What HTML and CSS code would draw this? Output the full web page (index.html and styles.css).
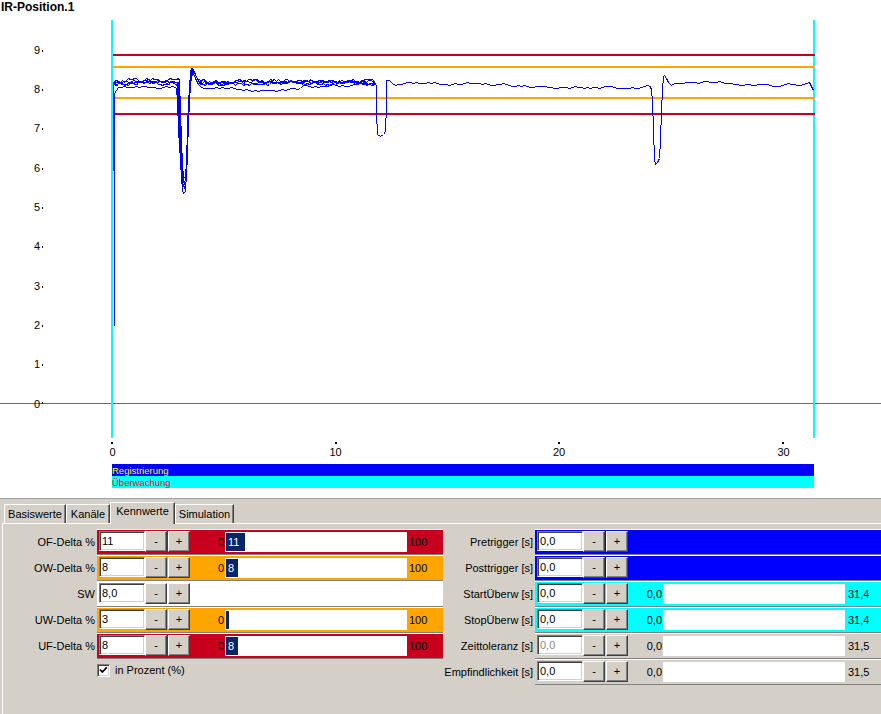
FILE: index.html
```html
<!DOCTYPE html>
<html lang="de">
<head>
<meta charset="utf-8">
<title>IR-Position.1</title>
<link rel="stylesheet" href="styles.css">
</head>
<body>
<section class="chart-area">
  <svg class="chart" width="881" height="498" viewBox="0 0 881 498">
    <rect class="zero-axis" x="0" y="403" width="881" height="1"/>
    <g class="ylabels">
      <text x="40" y="54">9</text>
      <text x="40" y="93">8</text>
      <text x="40" y="132">7</text>
      <text x="40" y="172">6</text>
      <text x="40" y="211">5</text>
      <text x="40" y="250">4</text>
      <text x="40" y="290">3</text>
      <text x="40" y="329">2</text>
      <text x="40" y="368">1</text>
      <text x="40" y="408">0</text>
    </g>
    <g class="yticks">
      <rect x="42" y="50" width="1" height="2"/>
      <rect x="42" y="89" width="1" height="2"/>
      <rect x="42" y="128" width="1" height="2"/>
      <rect x="42" y="168" width="1" height="2"/>
      <rect x="42" y="207" width="1" height="2"/>
      <rect x="42" y="246" width="1" height="2"/>
      <rect x="42" y="286" width="1" height="2"/>
      <rect x="42" y="325" width="1" height="2"/>
      <rect x="42" y="364" width="1" height="2"/>
      <rect x="42" y="402" width="1" height="2"/>
    </g>
    <rect class="cursor" x="111" y="20" width="2" height="418"/>
    <rect class="cursor" x="813" y="20" width="2" height="418"/>
    <rect class="lim-red" x="113" y="54" width="702" height="2"/>
    <rect class="lim-orange" x="113" y="66" width="702" height="2"/>
    <rect class="lim-orange" x="113" y="97" width="702" height="2"/>
    <rect class="lim-red" x="113" y="113" width="702" height="2"/>
    <polyline id="t1" class="trace" points=""/>
    <polyline id="t2" class="trace" points=""/>
    <polyline id="t3" class="trace" points=""/>
    <polyline id="t5" class="trace" points=""/>
    <polyline id="t4" class="trace" points=""/>
    <g class="xticks">
      <rect x="111" y="442" width="2" height="2"/>
      <rect x="335" y="442" width="2" height="2"/>
      <rect x="558" y="442" width="2" height="2"/>
      <rect x="782" y="442" width="2" height="2"/>
    </g>
    <g class="xlabels">
      <text x="112.5" y="456">0</text>
      <text x="335.5" y="456">10</text>
      <text x="559" y="456">20</text>
      <text x="783.5" y="456">30</text>
    </g>
    <rect class="leg-reg" x="112" y="464" width="702" height="12"/>
    <rect class="leg-uew" x="112" y="476" width="702" height="12"/>
    <text class="leg-text leg-reg-text" x="112" y="474">Registrierung</text>
    <text class="leg-text leg-uew-text" x="112" y="486">Überwachung</text>
  </svg>
  <h1 class="chart-title">IR-Position.1</h1>
</section>

<section class="panel">
  <div class="tabs">
    <div class="tab tab-1">Basiswerte</div>
    <div class="tab tab-2">Kanäle</div>
    <div class="tab tab-3 active">Kennwerte</div>
    <div class="tab tab-4">Simulation</div>
  </div>
  <div class="tab-body">
    <div class="col col-left">
      <div class="row">
        <div class="lbl">OF-Delta %</div>
        <div class="strip red">
          <input class="num" type="text" value="11" readonly>
          <button class="btn">-</button>
          <button class="btn plus">+</button>
          <span class="zero">0</span>
          <span class="bar"><span class="fill" style="width:19px">11</span></span>
          <span class="max">100</span>
        </div>
      </div>
      <div class="row">
        <div class="lbl">OW-Delta %</div>
        <div class="strip orange">
          <input class="num" type="text" value="8" readonly>
          <button class="btn">-</button>
          <button class="btn plus">+</button>
          <span class="zero">0</span>
          <span class="bar"><span class="fill" style="width:12px">8</span></span>
          <span class="max">100</span>
        </div>
      </div>
      <div class="row">
        <div class="lbl">SW</div>
        <div class="strip white">
          <input class="num" type="text" value="8,0" readonly>
          <button class="btn">-</button>
          <button class="btn plus">+</button>
        </div>
      </div>
      <div class="row">
        <div class="lbl">UW-Delta %</div>
        <div class="strip orange">
          <input class="num" type="text" value="3" readonly>
          <button class="btn">-</button>
          <button class="btn plus">+</button>
          <span class="zero">0</span>
          <span class="bar"><span class="fill" style="width:3px"></span></span>
          <span class="max">100</span>
        </div>
      </div>
      <div class="row">
        <div class="lbl">UF-Delta %</div>
        <div class="strip red">
          <input class="num" type="text" value="8" readonly>
          <button class="btn">-</button>
          <button class="btn plus">+</button>
          <span class="zero">0</span>
          <span class="bar"><span class="fill" style="width:12px">8</span></span>
          <span class="max">100</span>
        </div>
      </div>
      <label class="check-row">
        <span class="checkbox"><svg width="11" height="11" viewBox="0 0 11 11"><path d="M2 4.5 L4.3 7 L8.8 2.3" fill="none" stroke="#000" stroke-width="1.8"/></svg></span>
        <span class="check-label">in Prozent (%)</span>
      </label>
    </div>

    <div class="col col-right">
      <div class="row">
        <div class="lbl">Pretrigger [s]</div>
        <div class="strip blue">
          <input class="num" type="text" value="0,0" readonly>
          <button class="btn">-</button>
          <button class="btn plus">+</button>
        </div>
      </div>
      <div class="row">
        <div class="lbl">Posttrigger [s]</div>
        <div class="strip blue">
          <input class="num" type="text" value="0,0" readonly>
          <button class="btn">-</button>
          <button class="btn plus">+</button>
        </div>
      </div>
      <div class="row">
        <div class="lbl">StartÜberw [s]</div>
        <div class="strip cyan">
          <input class="num" type="text" value="0,0" readonly>
          <button class="btn">-</button>
          <button class="btn plus">+</button>
          <span class="zero">0,0</span>
          <span class="bar"></span>
          <span class="max">31,4</span>
        </div>
      </div>
      <div class="row">
        <div class="lbl">StopÜberw [s]</div>
        <div class="strip cyan">
          <input class="num" type="text" value="0,0" readonly>
          <button class="btn">-</button>
          <button class="btn plus">+</button>
          <span class="zero">0,0</span>
          <span class="bar"></span>
          <span class="max">31,4</span>
        </div>
      </div>
      <div class="row">
        <div class="lbl">Zeittoleranz [s]</div>
        <div class="strip plain">
          <input class="num disabled" type="text" value="0,0" disabled>
          <button class="btn">-</button>
          <button class="btn plus">+</button>
          <span class="zero">0,0</span>
          <span class="bar"></span>
          <span class="max">31,5</span>
        </div>
      </div>
      <div class="row">
        <div class="lbl">Empfindlichkeit [s]</div>
        <div class="strip plain">
          <input class="num" type="text" value="0,0" readonly>
          <button class="btn">-</button>
          <button class="btn plus">+</button>
          <span class="zero">0,0</span>
          <span class="bar"></span>
          <span class="max">31,5</span>
        </div>
      </div>
    </div>
  </div>
</section>
<script src="script.js"></script>
</body>
</html>
```

FILE: styles.css
```css
* {
  box-sizing: border-box;
}

html,
body {
  margin: 0;
  padding: 0;
}

body {
  width: 881px;
  height: 714px;
  overflow: hidden;
  background: #d4d0c8;
  font-family: "Liberation Sans", Arial, sans-serif;
  font-size: 11px;
  color: #000;
}

/* ---------- chart ---------- */
.chart-area {
  position: relative;
  height: 498px;
  background: #fff;
}

.chart {
  position: absolute;
  left: 0;
  top: 0;
  display: block;
}

.chart-title {
  position: relative;
  margin: 0;
  padding: 1px 0 0 1px;
  font-size: 12px;
  line-height: 13px;
  font-weight: bold;
}

.chart text {
  font-family: "Liberation Sans", Arial, sans-serif;
  font-size: 11px;
  fill: #000;
}

.ylabels text {
  text-anchor: end;
}

.xlabels text {
  text-anchor: middle;
}

.zero-axis {
  fill: #6e6e6e;
}

.yticks rect,
.xticks rect {
  fill: #000;
}

.cursor {
  fill: #00ffff;
}

.lim-red {
  fill: #c8001e;
}

.lim-orange {
  fill: #ffa500;
}

.trace {
  fill: none;
  stroke: #0000ff;
  stroke-width: 1;
  shape-rendering: crispEdges;
}

.leg-reg {
  fill: #0000ff;
}

.leg-uew {
  fill: #00ffff;
}

.chart .leg-text {
  font-size: 9.5px;
}

.chart .leg-reg-text {
  fill: #ffff00;
}

.chart .leg-uew-text {
  fill: #ff0000;
}

/* ---------- panel ---------- */
.panel {
  height: 216px;
  border-top: 1px solid #a0a0a0;
  background: #d4d0c8;
}

.tabs {
  display: flex;
  align-items: flex-end;
  height: 24px;
  padding-left: 4px;
}

.tab {
  flex: none;
  height: 19px;
  padding-top: 2px;
  border-top: 1px solid #fff;
  border-left: 1px solid #fff;
  border-right: 1px solid #404040;
  box-shadow: inset -1px 0 #808080;
  text-align: center;
  line-height: 14px;
  white-space: nowrap;
}

.tab-1 { width: 62px; }
.tab-2 { width: 44px; }
.tab-3 { width: 65px; }
.tab-4 { width: 59px; }

.tab.active {
  position: relative;
  z-index: 1;
  height: 22px;
  padding-top: 1px;
  margin-bottom: -1px;
  background: #d4d0c8;
}

.tab-body {
  display: flex;
  height: 191px;
  margin-left: 2px;
  padding-top: 5px;
  border-top: 1px solid #fff;
  border-left: 1px solid #fff;
}

.col-left {
  width: 440px;
  flex: none;
}

.col-right {
  width: 438px;
  flex: none;
}

.row {
  display: flex;
  height: 26px;
}

.lbl {
  flex: none;
  text-align: right;
  line-height: 26px;
  white-space: nowrap;
}

.col-left .lbl {
  width: 92px;
}

.col-right .lbl {
  width: 90px;
}

.strip {
  flex: none;
  display: flex;
  align-items: flex-start;
  width: 346px;
  height: 26px;
  margin-left: 2px;
  padding: 1px 0 0 2px;
  border-top: 1px solid #fff;
  border-bottom: 1px solid #808080;
}

.strip.red { background: #c8001e; }
.strip.orange { background: #ffa500; }
.strip.white { background: #fff; }
.strip.blue { background: #0000ff; }
.strip.cyan { background: #00ffff; }
.strip.plain { background: #d4d0c8; }

.num {
  flex: none;
  width: 46px;
  height: 20px;
  margin: 0;
  padding: 0 0 0 2px;
  border: 1px solid;
  border-color: #808080 #fff #fff #808080;
  box-shadow: inset 1px 1px #404040, inset -1px -1px #d4d0c8;
  background: #fff;
  font-family: "Liberation Sans", Arial, sans-serif;
  font-size: 11px;
  color: #000;
  outline: none;
}

.num.disabled {
  color: #8a8a8a;
  -webkit-text-fill-color: #8a8a8a;
  background: #fff;
  opacity: 1;
}

.btn {
  flex: none;
  width: 22px;
  height: 21px;
  margin: 0;
  padding: 0;
  border: 1px solid;
  border-color: #fff #404040 #404040 #fff;
  box-shadow: inset -1px -1px #808080;
  background: #d4d0c8;
  font-family: "Liberation Sans", Arial, sans-serif;
  font-size: 11px;
  line-height: 19px;
  color: #000;
  text-align: center;
}

.btn.plus {
  margin-left: 1px;
}

.zero {
  flex: none;
  width: 35px;
  padding-right: 1px;
  text-align: right;
  line-height: 22px;
}

.bar {
  flex: none;
  display: flex;
  width: 182px;
  height: 20px;
  margin-top: 1px;
  padding: 1px;
  background: #fff;
}

.fill {
  display: block;
  height: 100%;
  padding-left: 2px;
  overflow: hidden;
  white-space: nowrap;
  background: #0a246a;
  color: #fff;
  line-height: 18px;
}

.max {
  flex: none;
  margin-left: 2px;
  line-height: 22px;
}

.col-right .max {
  margin-left: 3px;
}

.check-row {
  display: flex;
  align-items: center;
  height: 13px;
  margin-top: 5px;
  padding-left: 94px;
}

.checkbox {
  flex: none;
  display: flex;
  align-items: center;
  justify-content: center;
  width: 13px;
  height: 13px;
  border: 1px solid;
  border-color: #808080 #fff #fff #808080;
  box-shadow: inset 1px 1px #404040, inset -1px -1px #d4d0c8;
  background: #fff;
}

.checkbox svg {
  display: block;
}

.check-label {
  margin-left: 5px;
  line-height: 13px;
}
```

FILE: script.js
```js
(function () {
  var seed = 987654321;
  function rnd() {
    seed = (seed * 16807) % 2147483647;
    return seed / 2147483647;
  }
  /* jittery random walk around a centre line */
  function walk(x0, x1, yc, amp, step, jit) {
    var pts = [];
    var y = yc;
    var j = jit || 4;
    for (var x = x0; x <= x1; x += step) {
      y += Math.round((rnd() - 0.5) * j);
      if (y > yc + amp) { y = yc + amp - 1; }
      if (y < yc - amp) { y = yc - amp + 1; }
      pts.push([x, y]);
    }
    return pts;
  }
  function put(id, parts) {
    var all = [];
    parts.forEach(function (p) { all = all.concat(p); });
    var el = document.getElementById(id);
    if (!el) { return; }
    el.setAttribute('points', all.map(function (p) {
      return (p[0] + 0.5) + ',' + (p[1] + 0.5);
    }).join(' '));
  }
  var uDip = [[375, 83], [376, 86], [376, 112], [377, 134], [380, 136], [383, 134], [385, 131], [386, 104], [386, 80]];

  put('t1', [[[113, 170], [113, 82]], walk(115, 176, 81, 2, 2, 5),
    [[177, 82], [178, 84], [179, 112], [180, 150], [181, 176], [182, 190], [183, 193], [185, 191], [186, 172], [187, 142], [188, 112], [189, 88], [190, 71], [191, 68], [193, 69], [195, 74], [197, 79], [199, 81]],
    walk(201, 373, 81, 2, 2, 5), uDip]);

  put('t2', [[[114, 84]], walk(116, 176, 83, 2, 2, 5),
    [[177, 83], [178, 105], [179, 140], [180, 165], [182, 183], [184, 187], [186, 180], [187, 150], [188, 118], [189, 92], [190, 76], [192, 70], [194, 72], [196, 77], [199, 82]],
    walk(201, 373, 83, 2, 2, 5), uDip]);

  put('t3', [[[114, 81]], walk(116, 178, 80, 2, 2, 5),
    [[179, 80], [180, 110], [181, 140], [182, 165], [183, 176], [185, 178], [186, 160], [187, 130], [188, 100], [190, 78], [192, 72], [194, 73], [197, 78], [200, 80]],
    walk(202, 373, 81, 2, 2, 5), uDip]);

  put('t5', [[[114, 83]], walk(116, 177, 82, 2, 3, 5),
    [[178, 82], [179, 100], [180, 130], [181, 160], [183, 180], [184, 184], [186, 170], [187, 140], [188, 108], [189, 86], [191, 70], [193, 70], [195, 75], [198, 80]],
    walk(200, 373, 82, 2, 3, 5), uDip]);

  put('t4', [[[114, 325], [114, 93], [116, 90]], walk(118, 175, 88, 2, 3, 3),
    [[176, 88], [177, 100], [178, 130], [180, 160], [182, 180], [184, 182], [186, 176], [187, 150], [188, 125], [189, 100], [190, 85], [191, 76], [193, 73], [195, 78], [198, 84], [201, 87]],
    walk(204, 300, 89, 2, 3, 3), walk(303, 373, 85, 2, 3, 3), uDip,
    [[389, 80], [392, 83]], walk(395, 648, 85, 3, 3, 3),
    [[650, 86], [651, 90], [652, 100], [653, 130], [654, 158], [655, 164], [657, 162], [659, 158], [660, 140], [661, 110], [662, 90], [663, 76], [664, 75], [666, 78], [668, 82], [671, 85]],
    walk(674, 811, 84, 3, 3, 3), [[813, 90]]]);
})();
```
